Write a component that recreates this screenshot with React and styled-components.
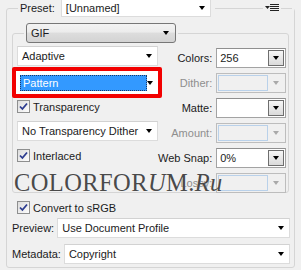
import React from "react";
import styled, { createGlobalStyle } from "styled-components";

const GlobalStyle = createGlobalStyle`
  html, body { margin: 0; padding: 0; background: #f0f0f0; }
  body {
    font-family: "Liberation Sans", Tahoma, Arial, sans-serif;
    font-size: 11px;
    color: #1b1b22;
  }
`;

const Panel = styled.div`
  position: relative;
  width: 301px;
  height: 270px;
  overflow: hidden;
  box-sizing: border-box;
  padding: 0 6px;
  background: #f0f0f0;
`;

const Group = styled.fieldset`
  margin: ${({ $margin }) => $margin || 0};
  padding: ${({ $pad }) => $pad || 0};
  height: ${({ $h }) => $h}px;
  box-sizing: border-box;
  border: 1px solid #d5d5d5;
  border-radius: 3px;
  min-width: 0;
`;

const Legend = styled.legend`
  display: flex;
  align-items: center;
  margin-left: ${({ $left }) => $left}px;
  padding: 0 2px;
  width: ${({ $w }) => ($w ? `${$w}px` : "auto")};
  box-sizing: border-box;
`;

const Label = styled.span`
  color: ${({ $off }) => ($off ? "#8e8e8e" : "#1b1b22")};
  white-space: nowrap;
`;

const Rule = styled.span`
  flex: ${({ $w }) => ($w ? `0 0 ${$w}px` : "1")};
  height: 1px;
  background: #d5d5d5;
  margin: 0 ${({ $mr }) => $mr || 0}px 0 ${({ $ml }) => $ml || 0}px;
`;

const Arrow = styled.span`
  width: 0;
  height: 0;
  border-left: 3.5px solid transparent;
  border-right: 3.5px solid transparent;
  border-top: 4px solid ${({ $off }) => ($off ? "#a9a9a9" : "#000")};
  margin-left: auto;
  flex: none;
`;

const FlatSelect = styled.div`
  display: flex;
  align-items: center;
  height: ${({ $h }) => $h || 20}px;
  width: ${({ $w }) => ($w ? `${$w}px` : "auto")};
  flex: ${({ $grow }) => ($grow ? 1 : "none")};
  box-sizing: border-box;
  background: #fff;
  border: 1px solid #dcdcdc;
  border-top-color: #d2d2d2;
  padding: 0 5px 0 4px;
  margin-top: ${({ $mt }) => $mt || 0}px;
  white-space: nowrap;
`;

const PresetBox = styled(FlatSelect)`
  margin-left: 6px;
  border-top: none;
`;

const GifButton = styled.div`
  display: flex;
  align-items: center;
  width: 150px;
  height: 20px;
  box-sizing: border-box;
  padding: 0 6px 0 4px;
  border: 1px solid #777;
  border-radius: 3px;
  background: linear-gradient(#f3f3f3 0%, #ececec 45%, #dddddd 50%, #d3d3d3 100%);
`;

const MenuIcon = () => (
  <svg width="14" height="8" viewBox="0 0 14 8" style={{ flex: "none" }}>
    <polygon points="0,2 5,2 2.5,5" fill="#222" />
    <rect x="5" y="0" width="9" height="1" fill="#222" />
    <rect x="5" y="2" width="9" height="1" fill="#222" />
    <rect x="5" y="4" width="9" height="1" fill="#222" />
    <rect x="5" y="6" width="9" height="1" fill="#222" />
  </svg>
);

const Body = styled.div`
  display: flex;
  padding: 3px 4px 0 4px;
`;

const LeftCol = styled.div`
  width: 150px;
  display: flex;
  flex-direction: column;
`;

const RightCol = styled.div`
  flex: 1;
  display: flex;
  flex-direction: column;
  gap: 5px;
  padding-top: 2px;
`;

const FieldRow = styled.div`
  display: flex;
  align-items: center;
  justify-content: flex-end;
  gap: 4px;
  height: 20px;
`;

const Combo = styled.div`
  display: flex;
  align-items: center;
  width: 70px;
  height: 20px;
  box-sizing: border-box;
  padding: 1px;
  border: 1px solid #a3a3a3;
  border-top-color: #8f8f8f;
  background: #fff;
`;

const ComboText = styled.span`
  flex: 1;
  padding-left: 2px;
`;

const ComboBtn = styled.span`
  display: flex;
  align-items: center;
  justify-content: center;
  width: 16px;
  height: 16px;
  box-sizing: border-box;
  border: 1px solid #6e6e6e;
  background: linear-gradient(#f7f7f7, #dadada);
  & > span { margin-left: 0; }
`;

const DisCombo = styled(Combo)`
  border-color: #bdbdbd;
  background: #f0f0f0;
`;

const DisField = styled.span`
  flex: 1;
  align-self: stretch;
  border: 1px solid #b9d1ea;
`;

const DisBtn = styled.span`
  display: flex;
  align-items: center;
  justify-content: center;
  width: 16px;
  & > span { margin-left: 0; }
`;

const RedFrame = styled.div`
  margin: 1px -4px 0 -5px;
  height: 31px;
  box-sizing: border-box;
  border: 4px solid #f20000;
  border-radius: 2px;
  background: #fff;
  display: flex;
  align-items: center;
  padding: 0 5px 0 4px;
`;

const Highlight = styled.span`
  width: 127px;
  height: 16px;
  box-sizing: border-box;
  display: flex;
  align-items: center;
  padding-left: 2px;
  background: #3399ff;
  color: #fff;
  border: 1px dotted #1c3a66;
`;

const CheckRow = styled.label`
  display: flex;
  align-items: center;
  gap: 3px;
  height: 13px;
  margin: ${({ $m }) => $m || 0};
`;

const Box = styled.span`
  width: 13px;
  height: 13px;
  box-sizing: border-box;
  border: 1px solid #8e8f8f;
  background: linear-gradient(135deg, #dcdcdc, #fdfdfd);
  display: flex;
  align-items: center;
  justify-content: center;
`;

const Check = () => (
  <Box>
    <svg width="11" height="11" viewBox="0 0 11 11">
      <path d="M2 5.5 L4.4 8 L9 2.5" fill="none" stroke="#2b3b8f" strokeWidth="1.8" />
    </svg>
  </Box>
);

const BottomRow = styled.div`
  display: flex;
  align-items: center;
  gap: 3px;
  margin: ${({ $m }) => $m};
`;

const Watermark = styled.div`
  position: absolute;
  left: 14px;
  top: 170px;
  font-family: "Liberation Serif", "Times New Roman", serif;
  font-size: 24.5px;
  line-height: 25px;
  color: #4a4a4a;
  letter-spacing: 0.4px;
  text-shadow: 0 0 1px #fff;
  white-space: nowrap;
  pointer-events: none;
  & i { font-style: italic; }
`;

const rows = [
  { label: "Colors:", value: "256" },
  { label: "Dither:", off: true },
  { label: "Matte:", value: "" },
  { label: "Amount:", off: true },
  { label: "Web Snap:", value: "0%" },
  { label: "Lossy:", off: true },
];

export default function App() {
  return (
    <Panel>
      <GlobalStyle />
      <Group $h={269} $margin="-1px 0 0 0">
        <Legend $left={11} $w={276}>
          <Label>Preset:</Label>
          <PresetBox $h={18} $w={150}>
            [Unnamed]
            <Arrow />
          </PresetBox>
          <Rule $ml={4} $mr={2} />
          <MenuIcon />
          <Rule $w={11} $ml={2} />
        </Legend>

        <Group $h={170} $margin="6px 5px 0 5px">
          <Legend $left={11}>
            <GifButton>
              GIF
              <Arrow />
            </GifButton>
          </Legend>
          <Body>
            <LeftCol>
              <FlatSelect>
                Adaptive
                <Arrow />
              </FlatSelect>
              <RedFrame>
                <Highlight>Pattern</Highlight>
                <Arrow />
              </RedFrame>
              <CheckRow $m="2px 0 0 0">
                <Check />
                Transparency
              </CheckRow>
              <FlatSelect $mt={8}>
                No Transparency Dither
                <Arrow />
              </FlatSelect>
              <CheckRow $m="8px 0 0 0">
                <Check />
                Interlaced
              </CheckRow>
            </LeftCol>
            <RightCol>
              {rows.map((r) => (
                <FieldRow key={r.label}>
                  <Label $off={r.off}>{r.label}</Label>
                  {r.off ? (
                    <DisCombo>
                      <DisField />
                      <DisBtn>
                        <Arrow $off />
                      </DisBtn>
                    </DisCombo>
                  ) : (
                    <Combo>
                      <ComboText>{r.value}</ComboText>
                      <ComboBtn>
                        <Arrow />
                      </ComboBtn>
                    </Combo>
                  )}
                </FieldRow>
              ))}
            </RightCol>
          </Body>
        </Group>

        <CheckRow $m="8px 0 0 10px">
          <Check />
          Convert to sRGB
        </CheckRow>
        <BottomRow $m="4px 4px 0 5px">
          <Label>Preview:</Label>
          <FlatSelect $grow>
            Use Document Profile
            <Arrow />
          </FlatSelect>
        </BottomRow>
        <BottomRow $m="6px 4px 0 5px">
          <Label>Metadata:</Label>
          <FlatSelect $grow>
            Copyright
            <Arrow />
          </FlatSelect>
        </BottomRow>
      </Group>
      <Watermark>
        COLORFOR<i>U</i>M.<i>Ru</i>
      </Watermark>
    </Panel>
  );
}
